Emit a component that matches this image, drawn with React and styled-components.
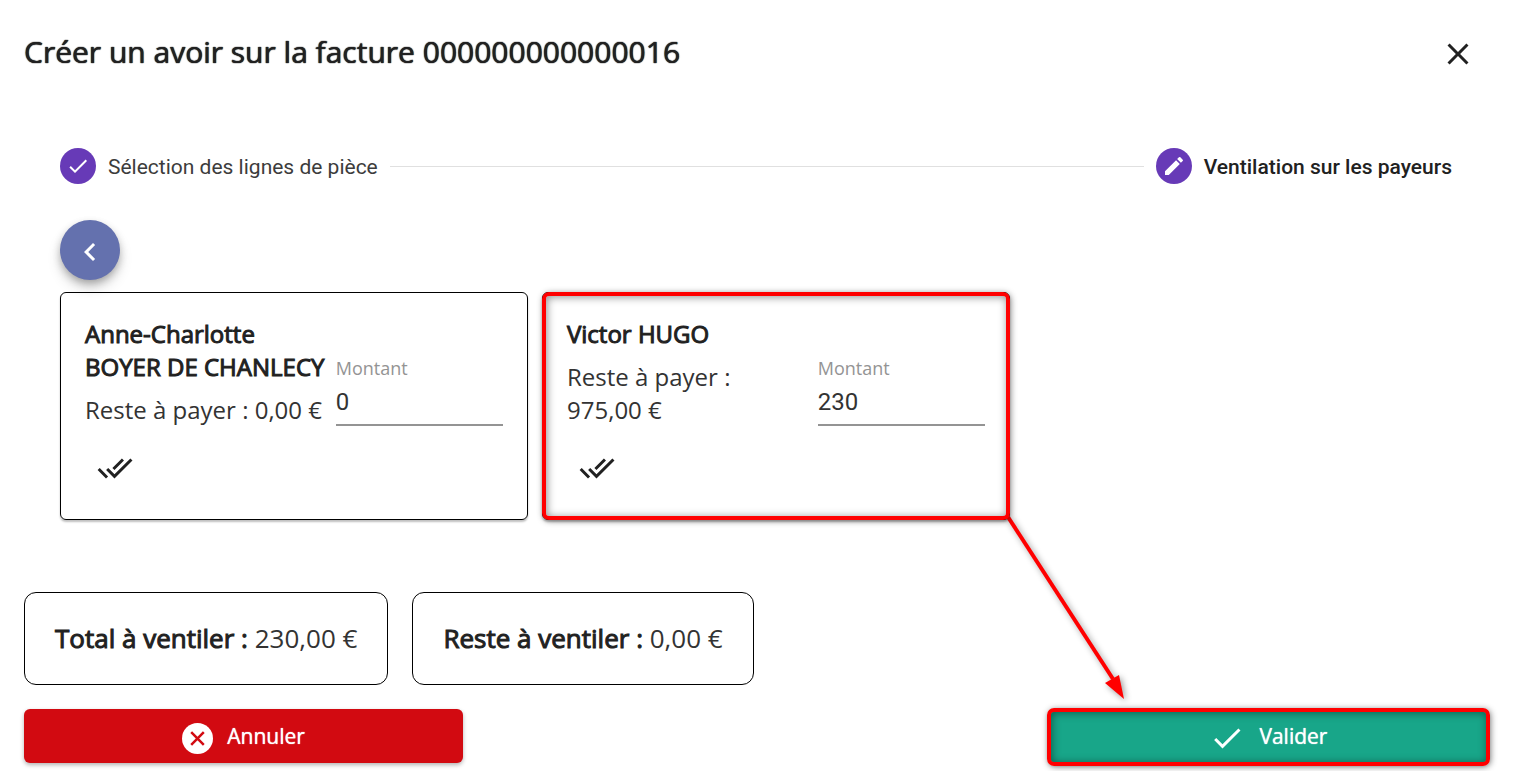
import styled, { createGlobalStyle, css } from "styled-components"
import { MdCheck, MdChevronLeft, MdClose, MdCreate, MdDoneAll } from "react-icons/md"

const GlobalStyle = createGlobalStyle`
    * {
        box-sizing: border-box;
    }
    body {
        margin: 0;
        background-color: #fff;
        color: #212121;
        font-family: 'Open Sans', 'Noto Sans', sans-serif;
    }
    button, input {
        font-family: inherit;
        color: inherit;
    }
`

const strong = css`
    font-weight: 400;
    -webkit-text-stroke: 1px currentColor;
`

const StyledDialog = styled.main`
    padding: 24px 31px 8px 24px;
`

const Header = styled.header`
    display: flex;
    align-items: flex-start;
    justify-content: space-between;
    height: 60px;
    h1 {
        margin: 0;
        font-size: 30px;
        font-weight: 400;
        line-height: 56px;
        text-shadow: 0 0 1px currentColor, 0 0 1px currentColor;
    }
`

const IconButton = styled.button`
    display: flex;
    align-items: center;
    justify-content: center;
    width: 60px;
    height: 60px;
    padding: 0;
    border: none;
    border-radius: 50%;
    background: none;
    font-size: 36px;
    cursor: pointer;
`

const Stepper = styled.ol`
    display: flex;
    align-items: center;
    gap: 12px;
    height: 108px;
    margin: 28px 0 0;
    padding: 0 36px;
    list-style: none;
    font-family: Roboto, sans-serif;
    font-size: 21px;
`

const StyledStep = styled.li`
    display: flex;
    align-items: center;
    gap: 12px;
    color: ${({ $active }) => ($active ? "#212121" : "#3c3c3c")};
    font-weight: ${({ $active }) => ($active ? 500 : 400)};
    &:not(:last-child) {
        flex: 1;
    }
    &:not(:last-child)::after {
        content: "";
        flex: 1;
        border-top: 1px solid #e0e0e0;
    }
`

const StepLabel = styled.span`
    padding-top: 2px;
`

const StepIcon = styled.span`
    display: flex;
    align-items: center;
    justify-content: center;
    width: 36px;
    height: 36px;
    border-radius: 50%;
    background-color: #673ab7;
    color: #fff;
    font-size: 24px;
`

const Content = styled.section`
    padding: 0 36px;
`

const BackButton = styled(IconButton)`
    padding-top: 4px;
    background-color: #6471ae;
    color: #fff;
    box-shadow: 0 4px 8px -1px rgba(0, 0, 0, .3), 0 8px 14px rgba(0, 0, 0, .14);
`

// red frame drawn over the element to point it out
const highlight = css`
    position: relative;
    &::after {
        content: "";
        position: absolute;
        inset: -1px;
        border: 4px solid #f00;
        border-radius: 7px;
        box-shadow: 1px 1px 6px rgba(0, 0, 0, .45), inset 1px 1px 8px rgba(0, 0, 0, .45);
        pointer-events: none;
    }
`

const Cards = styled.div`
    display: flex;
    gap: 14px;
    margin-top: 12px;
`

const StyledCard = styled.article`
    flex: 0 1 468px;
    padding: 24px 24px 21px;
    border: 1px solid #000;
    border-radius: 6px;
    box-shadow: 0 2px 2px rgba(0, 0, 0, .25);
    ${({ $highlighted }) => $highlighted && highlight}
`

const CardBody = styled.div`
    display: flex;
    align-items: flex-end;
    min-height: 109px;
    margin-bottom: 12px;
`

const Payer = styled.div`
    flex: 0 0 60%;
    align-self: flex-start;
    font-size: 24px;
    line-height: 33px;
    h2 {
        margin: 0 0 10px;
        font-size: inherit;
        ${strong}
    }
    p {
        margin: 0;
        color: #333;
    }
`

const Field = styled.label`
    display: flex;
    flex-direction: column;
    flex: 1;
    min-width: 0;
    font-size: 18px;
    line-height: 24px;
    color: #949494;
    input {
        width: 100%;
        height: 46px;
        padding: 0;
        border: none;
        border-bottom: 2px solid #949494;
        outline: none;
        background: none;
        font-family: Roboto, sans-serif;
        font-size: 24px;
        color: #333;
    }
`

const StyledArrow = styled.svg`
    position: absolute;
    top: 100%;
    left: 100%;
    overflow: visible;
    filter: drop-shadow(2px 2px 3px rgba(0, 0, 0, .4));
    pointer-events: none;
`

const Totals = styled.div`
    display: flex;
    gap: 24px;
    margin-top: 72px;
`

const Total = styled.div`
    padding: 28px 30px;
    border: 1px solid #000;
    border-radius: 12px;
    color: #333;
    font-size: 26px;
    line-height: 35px;
    strong {
        color: #212121;
        ${strong}
    }
`

const Footer = styled.footer`
    display: flex;
    justify-content: space-between;
    margin-top: 24px;
`

const ActionButton = styled.button`
    display: flex;
    align-items: center;
    justify-content: center;
    gap: 14px;
    width: 30%;
    height: 54px;
    border: none;
    border-radius: 6px;
    background-color: ${({ $color }) => $color};
    color: #fff;
    font-size: 21px;
    font-weight: 400;
    text-shadow: 0 0 1px currentColor;
    box-shadow: 0 2px 4px rgba(0, 0, 0, .3);
    cursor: pointer;
    svg {
        margin-top: 4px;
    }
    ${({ $highlighted }) => $highlighted && highlight}
    &::after {
        inset: -1px -2px -3px;
    }
`

const Arrow = () => (
    <StyledArrow width="115" height="179" viewBox="0 0 115 179" aria-hidden="true">
        <path d="M-1 -2L104 160" stroke="#f00" strokeWidth="4" />
        <path d="M115 180L96 164L110 156Z" fill="#f00" />
    </StyledArrow>
)

const CancelIcon = () => (
    <svg width="31" height="31" viewBox="0 0 31 31" aria-hidden="true">
        <circle cx="15.5" cy="15.5" r="15.5" fill="#fff" />
        <path d="M9.2 9.2l12.6 12.6m0-12.6l-12.6 12.6" stroke="#d20a11" strokeWidth="2.5" />
    </svg>
)

const Step = ({ text, icon, active }) => (
    <StyledStep $active={active} aria-current={active ? "step" : undefined}>
        <StepIcon>{icon}</StepIcon>
        <StepLabel>{text}</StepLabel>
    </StyledStep>
)

const PayerCard = ({ name, rest, amount, highlighted }) => (
    <StyledCard $highlighted={highlighted}>
        <CardBody>
            <Payer>
                <h2>{name}</h2>
                <p>Reste à payer : {rest}</p>
            </Payer>
            <Field>
                Montant
                <input type="text" inputMode="decimal" defaultValue={amount} />
            </Field>
        </CardBody>
        <IconButton type="button" aria-label="Tout ventiler">
            <MdDoneAll />
        </IconButton>
        {highlighted && <Arrow />}
    </StyledCard>
)

const App = () => {
    return (
        <>
            <GlobalStyle />
            <StyledDialog>
                <Header>
                    <h1>Créer un avoir sur la facture 000000000000016</h1>
                    <IconButton type="button" aria-label="Fermer">
                        <MdClose />
                    </IconButton>
                </Header>
                <Stepper>
                    <Step text="Sélection des lignes de pièce" icon={<MdCheck />} />
                    <Step text="Ventilation sur les payeurs" icon={<MdCreate />} active />
                </Stepper>
                <Content>
                    <BackButton type="button" aria-label="Retour">
                        <MdChevronLeft />
                    </BackButton>
                    <Cards>
                        <PayerCard name="Anne-Charlotte BOYER DE CHANLECY" rest={"0,00\u00a0€"} amount="0" />
                        <PayerCard name="Victor HUGO" rest={"975,00\u00a0€"} amount="230" highlighted />
                    </Cards>
                </Content>
                <Totals>
                    <Total><strong>Total à ventiler :</strong> 230,00 €</Total>
                    <Total><strong>Reste à ventiler :</strong> 0,00 €</Total>
                </Totals>
                <Footer>
                    <ActionButton type="button" $color="#d20a11">
                        <CancelIcon />
                        Annuler
                    </ActionButton>
                    <ActionButton type="button" $color="#18a689" $highlighted>
                        <MdCheck size={36} />
                        Valider
                    </ActionButton>
                </Footer>
            </StyledDialog>
        </>
    )
}

export default App
